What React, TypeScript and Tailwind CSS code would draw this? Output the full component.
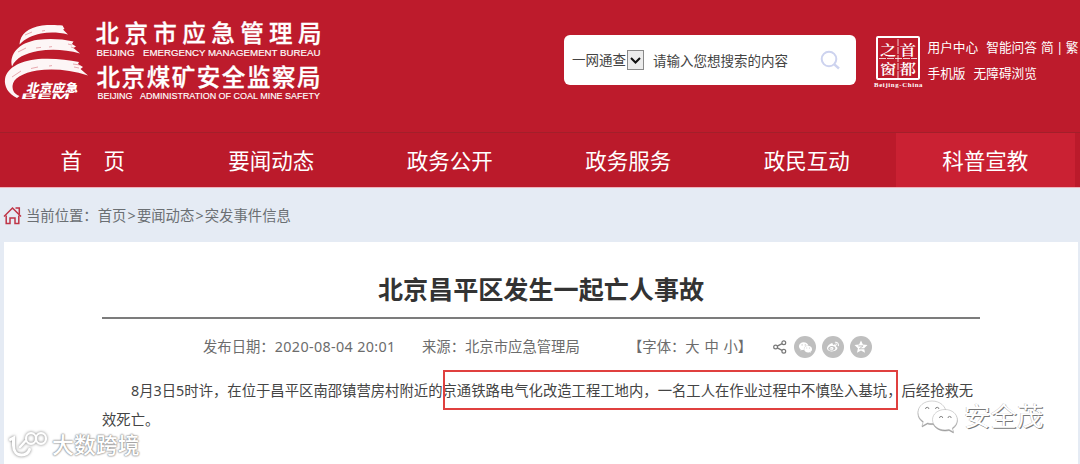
/**
 * News article page: site header, main nav, breadcrumb and article body
 */

import { FaWeibo } from 'react-icons/fa';
import { AiFillWechat } from 'react-icons/ai';

const NAV_ITEMS = ['首\u3000页', '要闻动态', '政务公开', '政务服务', '政民互动', '科普宣教'];
const ACTIVE_ITEM = '科普宣教';

function SiteLogo() {
  return (
    <svg className="block h-[90px] w-[330px]" viewBox="0 15 330 90" fill="#fff" role="img">
      {/* Brush-stroke temple */}
      <g fillOpacity="0.96">
        <path d="M19.5 44.5C20 34.5 28 27.5 42 25.5C50 24.6 57 25 62.500 25.500L64.500 29L63 29.500L68 34.500C58 32 49 32 41 33.500C32 35.500 25 38.500 19.500 44.500Z" />
        <path d="M12 66.500C9 54 19 42.500 38 39.800C50 38.400 62 39 73.500 41.500L72 44L76 46.500L73.500 48L80 53.500C66 49.500 51 49 38 51C25 53.500 16 57.500 12 66.500Z" />
        <path d="M17 98C8 94 4 86 5 79C7 67 22 60 42 58.800C56 58.200 68 60 79 62L78 64L83 67L80.500 69L88 75.500C70 69.500 52 68.300 37 70.500C23 73 13 78 12.500 86C12.500 91 14.500 94 19.500 96Z" />
      </g>
      <g stroke="#bd1b2c" strokeWidth="0.500" strokeOpacity="0.700" fill="none">
        <path d="M25 35l7-3M42 31l3-.5M18 52l8-4M36 48l5-.6M49 47l3-.4M12 77l9-6M31 68.500l7-1.500M49 66l3-.4M73 64l7 1M74 67l5 1M68 44l4 1M71 47l3 1" />
      </g>
      <g fontFamily="'Noto Sans CJK SC', sans-serif" fontWeight="900">
        <text transform="translate(26 91.500) skewX(-12) scale(1.12 1)" fontSize="11.500">北京应急</text>
      </g>
      {/* BEM monogram under the Chinese name */}
      <text
        transform="translate(20.500 98.500) skewX(-14) scale(2.750 1)"
        fontFamily="'Liberation Sans', sans-serif"
        fontSize="8"
        fontWeight="700"
      >
        BEM
      </text>
      {/* Bureau names */}
      <g fontFamily="'Noto Sans CJK SC', sans-serif" fontWeight="500" fontSize="23.500" stroke="#fff" strokeWidth="0.300">
        <text x="95.500" y="42" textLength="226" lengthAdjust="spacing">北京市应急管理局</text>
        <text x="96.500" y="85.800" textLength="224" lengthAdjust="spacing">北京煤矿安全监察局</text>
      </g>
      <g fontFamily="'Liberation Sans', sans-serif" fontSize="9" stroke="#fff" strokeWidth="0.150">
        <text x="96.500" y="55.500" textLength="38" lengthAdjust="spacingAndGlyphs">BEIJING</text>
        <text x="143" y="55.500" textLength="177.500" lengthAdjust="spacingAndGlyphs">EMERGENCY MANAGEMENT BUREAU</text>
        <text x="97.500" y="99.300" textLength="35" lengthAdjust="spacingAndGlyphs">BEIJING</text>
        <text x="140" y="99.300" textLength="180" lengthAdjust="spacingAndGlyphs">ADMINISTRATION OF COAL MINE SAFETY</text>
      </g>
    </svg>
  );
}

function CapitalWindowSeal() {
  return (
    <svg className="block h-[54px] w-[50px]" viewBox="873 35 50 54" fill="#fff" role="img">
      <rect x="877" y="37" width="42" height="42" rx="1" fill="none" stroke="#fff" strokeWidth="2" />
      <path d="M898 39v39M879 58.500h38" stroke="#fff" strokeWidth="0.800" strokeDasharray="7 1" />
      <g fontFamily="'Noto Serif CJK SC', 'Noto Sans CJK SC', serif" fontWeight="600" fontSize="16.500">
        <text transform="translate(880 54.500) scale(1 .86)">之</text>
        <text transform="translate(899.500 54.500) scale(1 .86)">首</text>
        <text transform="translate(880 74) scale(1 .86)">窗</text>
        <text transform="translate(899.500 74) scale(1 .86)">都</text>
      </g>
      <text x="874" y="86.500" fontFamily="'Liberation Serif', serif" fontWeight="700" fontSize="6.800" textLength="48.500">
        Beijing-China
      </text>
    </svg>
  );
}

function SearchBox() {
  return (
    <div className="mt-[35px] ml-[234px] flex h-[50px] w-[292px] shrink-0 items-center rounded-md bg-white pl-2 text-[13.500px] text-[#444]">
      <span className="w-[55px] whitespace-nowrap">一网通查</span>
      <span className="flex h-5 w-[17px] items-center justify-center border border-[#8a8a8a] bg-[#ececec]">
        <svg className="h-[7px] w-[11px]" viewBox="0 0 11 7" fill="none" stroke="#111" strokeWidth="2">
          <path d="M1 1l4.500 4.500L10 1" />
        </svg>
      </span>
      <span className="ml-[9px] w-[167px] pt-0.5">请输入您想搜索的内容</span>
      <svg className="h-5 w-5" viewBox="0 0 20 20" fill="none" stroke="#cdd3ef" strokeWidth="2">
        <circle cx="9" cy="9" r="7.300" />
        <path d="M14.300 14.300l4.700 4.200" strokeWidth="2.400" />
      </svg>
    </div>
  );
}

function Header() {
  return (
    <header className="flex h-[132px] items-start bg-[#bd1b2c]">
      <div className="pt-[15px]">
        <SiteLogo />
      </div>
      <SearchBox />
      <div className="ml-[17px] shrink-0 pt-[35px]">
        <CapitalWindowSeal />
      </div>
      <div className="ml-[4.500px] shrink-0 pt-[35px] text-[12.700px] leading-[25.500px] whitespace-nowrap text-white">
        <div className="flex">
          <span>用户中心</span>
          <span className="ml-2">智能问答</span>
          <span className="ml-1">简</span>
          <span className="w-3 text-center">|</span>
          <span>繁</span>
        </div>
        <div className="flex gap-2">
          <span>手机版</span>
          <span>无障碍浏览</span>
        </div>
      </div>
    </header>
  );
}

function MainNav() {
  return (
    <nav className="flex h-14 border-t border-b border-t-[#a31f2a] border-b-[#efb3bc] bg-[#bb1a2b] pl-[3.500px]">
      {NAV_ITEMS.map((item) => (
        <a
          key={item}
          className={`flex w-[178.500px] items-center justify-center pt-[3px] text-[21.500px] text-white ${
            item === ACTIVE_ITEM ? 'bg-[#ca2133]' : ''
          }`}
        >
          {item}
        </a>
      ))}
    </nav>
  );
}

function Breadcrumb() {
  return (
    <div className="flex h-[54px] items-center pl-[3px] text-[14.350px] text-[#6b6f73]">
      <svg className="mr-1 h-[19px] w-[19px]" viewBox="0 0 19 19" fill="none" stroke="#bf3446" strokeWidth="1.500">
        <path d="M1 10.500L9.500 2L18 10.500" />
        <path d="M12.500 2h3.800v6" />
        <path d="M3.200 9.500V17.500H7V12H12V17.500H15.800V9.500" />
      </svg>
      <span className="flex pt-px">
        <span>当前位置：首页</span>
        <span className="w-[10.500px] text-center">&gt;</span>
        <span>要闻动态</span>
        <span className="w-[10.500px] text-center">&gt;</span>
        <span>突发事件信息</span>
      </span>
    </div>
  );
}

function ShareIcons() {
  return (
    <div className="ml-[21px] flex items-center">
      <svg className="mr-[7px] h-[14px] w-[14px]" viewBox="0 0 14 14" fill="none" stroke="#777" strokeWidth="1.200">
        <circle cx="2.600" cy="7" r="1.900" />
        <circle cx="10.800" cy="2.700" r="1.900" />
        <circle cx="10.800" cy="11.300" r="1.900" />
        <path d="M4.300 6.100l4.800-2.500M4.300 7.900l4.800 2.500" />
      </svg>
      <div className="flex gap-1.5">
        <span className="flex h-[22px] w-[22px] items-center justify-center rounded-full bg-[#bfbfbf] text-white">
          <AiFillWechat size={15} />
        </span>
        <span className="flex h-[22px] w-[22px] items-center justify-center rounded-full bg-[#bfbfbf] text-white">
          <FaWeibo size={12} />
        </span>
        <span className="flex h-[22px] w-[22px] items-center justify-center rounded-full bg-[#bfbfbf]">
          <svg className="h-[14px] w-[14px]" viewBox="0 0 14 14">
            <path d="M7 .5l1.900 4.100 4.600.5-3.400 3.100.9 4.600L7 10.500l-4 2.300.9-4.600L.5 5.100l4.600-.5z" fill="#fff" />
            <path d="M4.300 5.900h4.800L5.300 8.800h5" fill="none" stroke="#bfbfbf" strokeWidth="0.900" />
          </svg>
        </span>
      </div>
    </div>
  );
}

function Article() {
  return (
    <main className="mr-0.5 ml-1 h-[222px] bg-white pt-[26px] pr-[98px] pl-[98px]">
      <h1 className="h-[51px] border-b-2 border-[#7c7c7c] text-center text-[25.100px] leading-[42px] font-bold text-[#333]">
        北京昌平区发生一起亡人事故
      </h1>
      <div className="flex h-[56px] items-center pl-[101px] text-[14.350px] whitespace-nowrap text-[#6c6c6c]">
        <span className="w-[219px]">
          发布日期：<span className="tracking-[0.350px]">2020-08-04 20:01</span>
        </span>
        <span className="w-[206px]">来源：北京市应急管理局</span>
        <span className="[word-spacing:1px]">【字体：大 中 小】</span>
        <ShareIcons />
      </div>
      <div className="relative pt-[2px] text-[14.350px] leading-[28.500px] text-[#444]">
        <p className="indent-[29px]">
          8月3日5时许，在位于昌平区南邵镇营房村附近的京通铁路电气化改造工程工地内，一名工人在作业过程中不慎坠入基坑，后经抢救无效死亡。
        </p>
        {/* Highlight frame around the key sentence */}
        <span className="absolute -top-[5px] left-[341px] h-10 w-[455px] border-2 border-[#e0403f]" />
      </div>
    </main>
  );
}

// Channel watermark, bottom right
function ChannelMark() {
  return (
    <div className="absolute top-[398px] left-[916px] flex items-center">
      <svg className="h-[36px] w-[44px] drop-shadow-[0.500px_1px_0.500px_#999]" viewBox="0 0 44 36" fill="#fff" stroke="#aaa" strokeWidth="0.500">
        <path d="M16 3C8 3 2 8 2 14.500c0 4 2 7 5.300 9L6 28l5.500-3c1.500.4 3 .6 4.500.6 8 0 14-5 14-11.100S24 3 16 3z" />
        <path d="M29 11.500c-7 0-12.500 4.500-12.500 10.200S22 32 29 32c1.500 0 2.700-.2 4-.5l4.500 2.500-1.200-4c3-2 5-4.800 5-8.300 0-5.700-5.300-10.200-12.300-10.200z" />
        <g fill="none" stroke="#888" strokeWidth="1">
          <path d="M9.500 11a1.700 1.700 0 0 1 3.400 0M19.500 11a1.700 1.700 0 0 1 3.400 0M23.500 20a1.600 1.600 0 0 1 3.200 0M32 20a1.600 1.600 0 0 1 3.200 0" />
        </g>
      </svg>
      <span className="ml-1 text-[26.500px] leading-9 text-white [text-shadow:1px_1px_0.500px_#777,-0.500px_-0.500px_0.500px_#bbb]">安全茂</span>
    </div>
  );
}

// Platform watermark, bottom left
function PlatformMark() {
  return (
    <div className="absolute top-[429px] left-[7px] flex items-center">
      <svg className="h-[30px] w-[42px] drop-shadow-[0_0_1.500px_#777]" viewBox="0 0 42 30" fill="none" stroke="#fff" strokeLinecap="round">
        <path d="M3.500 9.500L6.500 8V15.500C6.500 21.500 10 25 14.500 25C18.500 25 21.500 22.500 22.500 19.500" strokeWidth="3" />
        <path d="M13 17L18.500 11" strokeWidth="2.500" />
        <ellipse cx="24" cy="8.500" rx="5" ry="5.300" strokeWidth="2.200" />
        <ellipse cx="34" cy="8.500" rx="5" ry="5.300" strokeWidth="2.200" />
      </svg>
      <span className="ml-[3px] text-[21.900px] leading-8 font-medium text-white [text-shadow:0_0_2px_#888,0_0_2px_#999,0_0_1px_#aaa]">
        大数跨境
      </span>
    </div>
  );
}

export default function App() {
  return (
    <div className="relative h-[464px] w-[1080px] overflow-hidden bg-[#e5ebf4] font-['Noto_Sans','Noto_Sans_CJK_SC',sans-serif]">
      <Header />
      <MainNav />
      <Breadcrumb />
      <Article />
      <ChannelMark />
      <PlatformMark />
    </div>
  );
}
